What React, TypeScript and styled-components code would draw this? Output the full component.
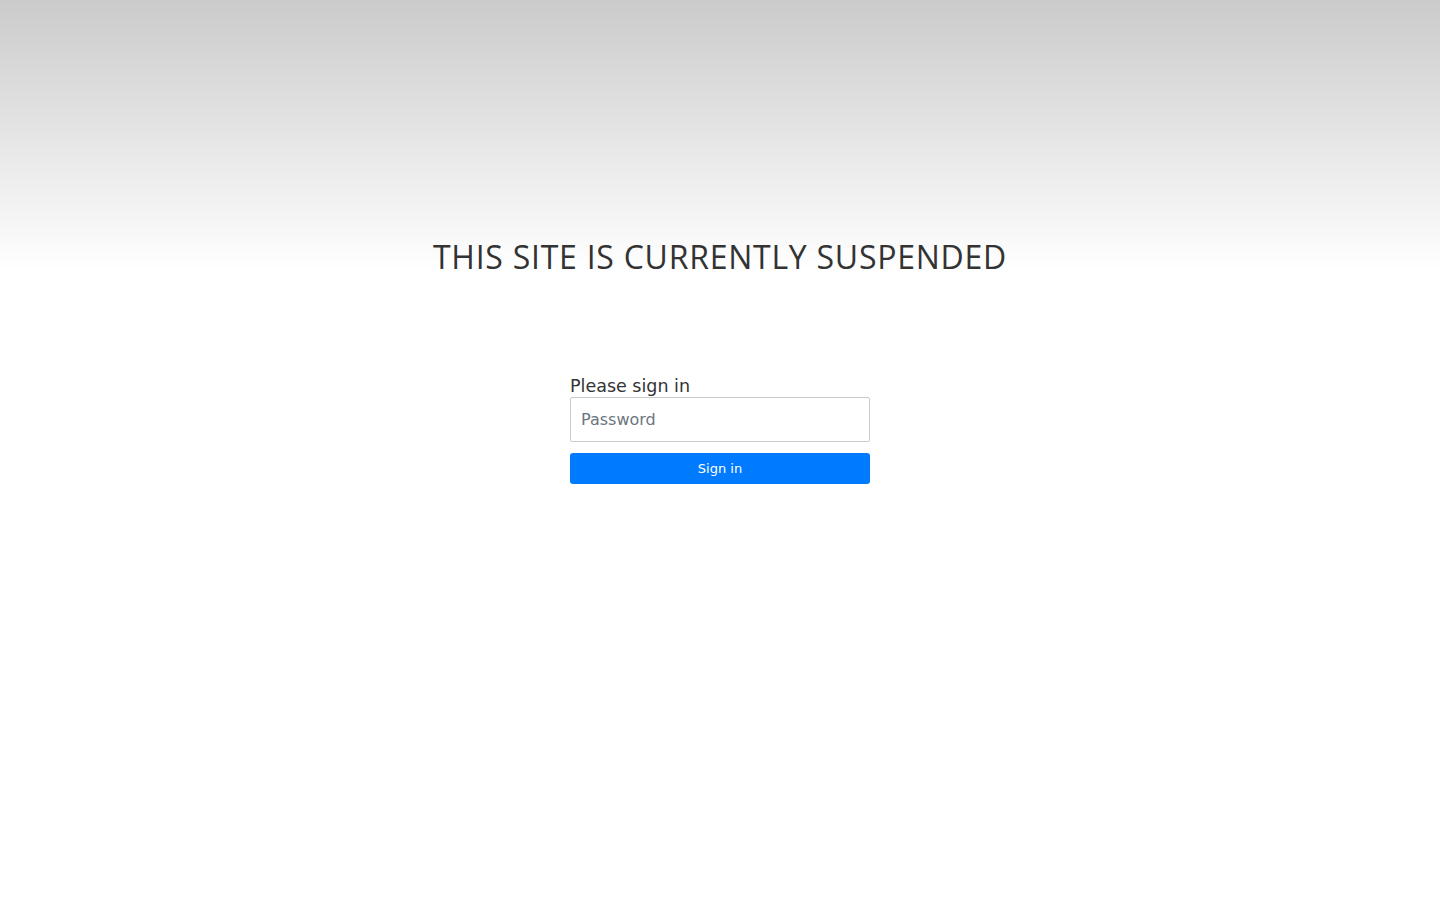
import styled, { createGlobalStyle } from "styled-components";

const GlobalStyle = createGlobalStyle`
  html, body {
    margin: 0;
    padding: 0;
    background: #fff;
  }
  body {
    font-family: "DejaVu Sans", sans-serif;
    color: #212529;
  }
`;

const Page = styled.div`
  min-height: 900px;
  background: linear-gradient(to bottom, #cbcbcb 0px, #ffffff 270px, #ffffff 100%);
  background-repeat: no-repeat;
`;

const Header = styled.header`
  padding-top: 237px;
  text-align: center;
`;

const Title = styled.h1`
  margin: 0;
  font-family: "Open Sans", sans-serif;
  font-weight: 400;
  font-size: 32px;
  line-height: 40px;
  letter-spacing: 0.75px;
  color: #333;
`;

const Form = styled.form`
  width: 300px;
  margin: 98px auto 0;
  display: flex;
  flex-direction: column;
`;

const Label = styled.label`
  font-size: 17.5px;
  line-height: 22px;
  color: #333;
`;

const Input = styled.input`
  box-sizing: border-box;
  height: 45px;
  padding: 0 10px;
  border: 1px solid #ccc;
  border-radius: 2px;
  font-family: "DejaVu Sans", sans-serif;
  font-size: 16px;
  color: #495057;
  outline: none;
  &::placeholder {
    color: #6c757d;
  }
`;

const Button = styled.button`
  margin-top: 11px;
  height: 31px;
  padding-bottom: 2px;
  border: none;
  border-radius: 3px;
  background: #007bff;
  color: #fff;
  font-family: "DejaVu Sans", sans-serif;
  font-size: 13px;
  cursor: pointer;
`;

export default function App() {
  return (
    <Page>
      <GlobalStyle />
      <Header>
        <Title>THIS SITE IS CURRENTLY SUSPENDED</Title>
      </Header>
      <Form onSubmit={(e) => e.preventDefault()}>
        <Label htmlFor="pw">Please sign in</Label>
        <Input id="pw" type="password" placeholder="Password" />
        <Button type="submit">Sign in</Button>
      </Form>
    </Page>
  );
}
